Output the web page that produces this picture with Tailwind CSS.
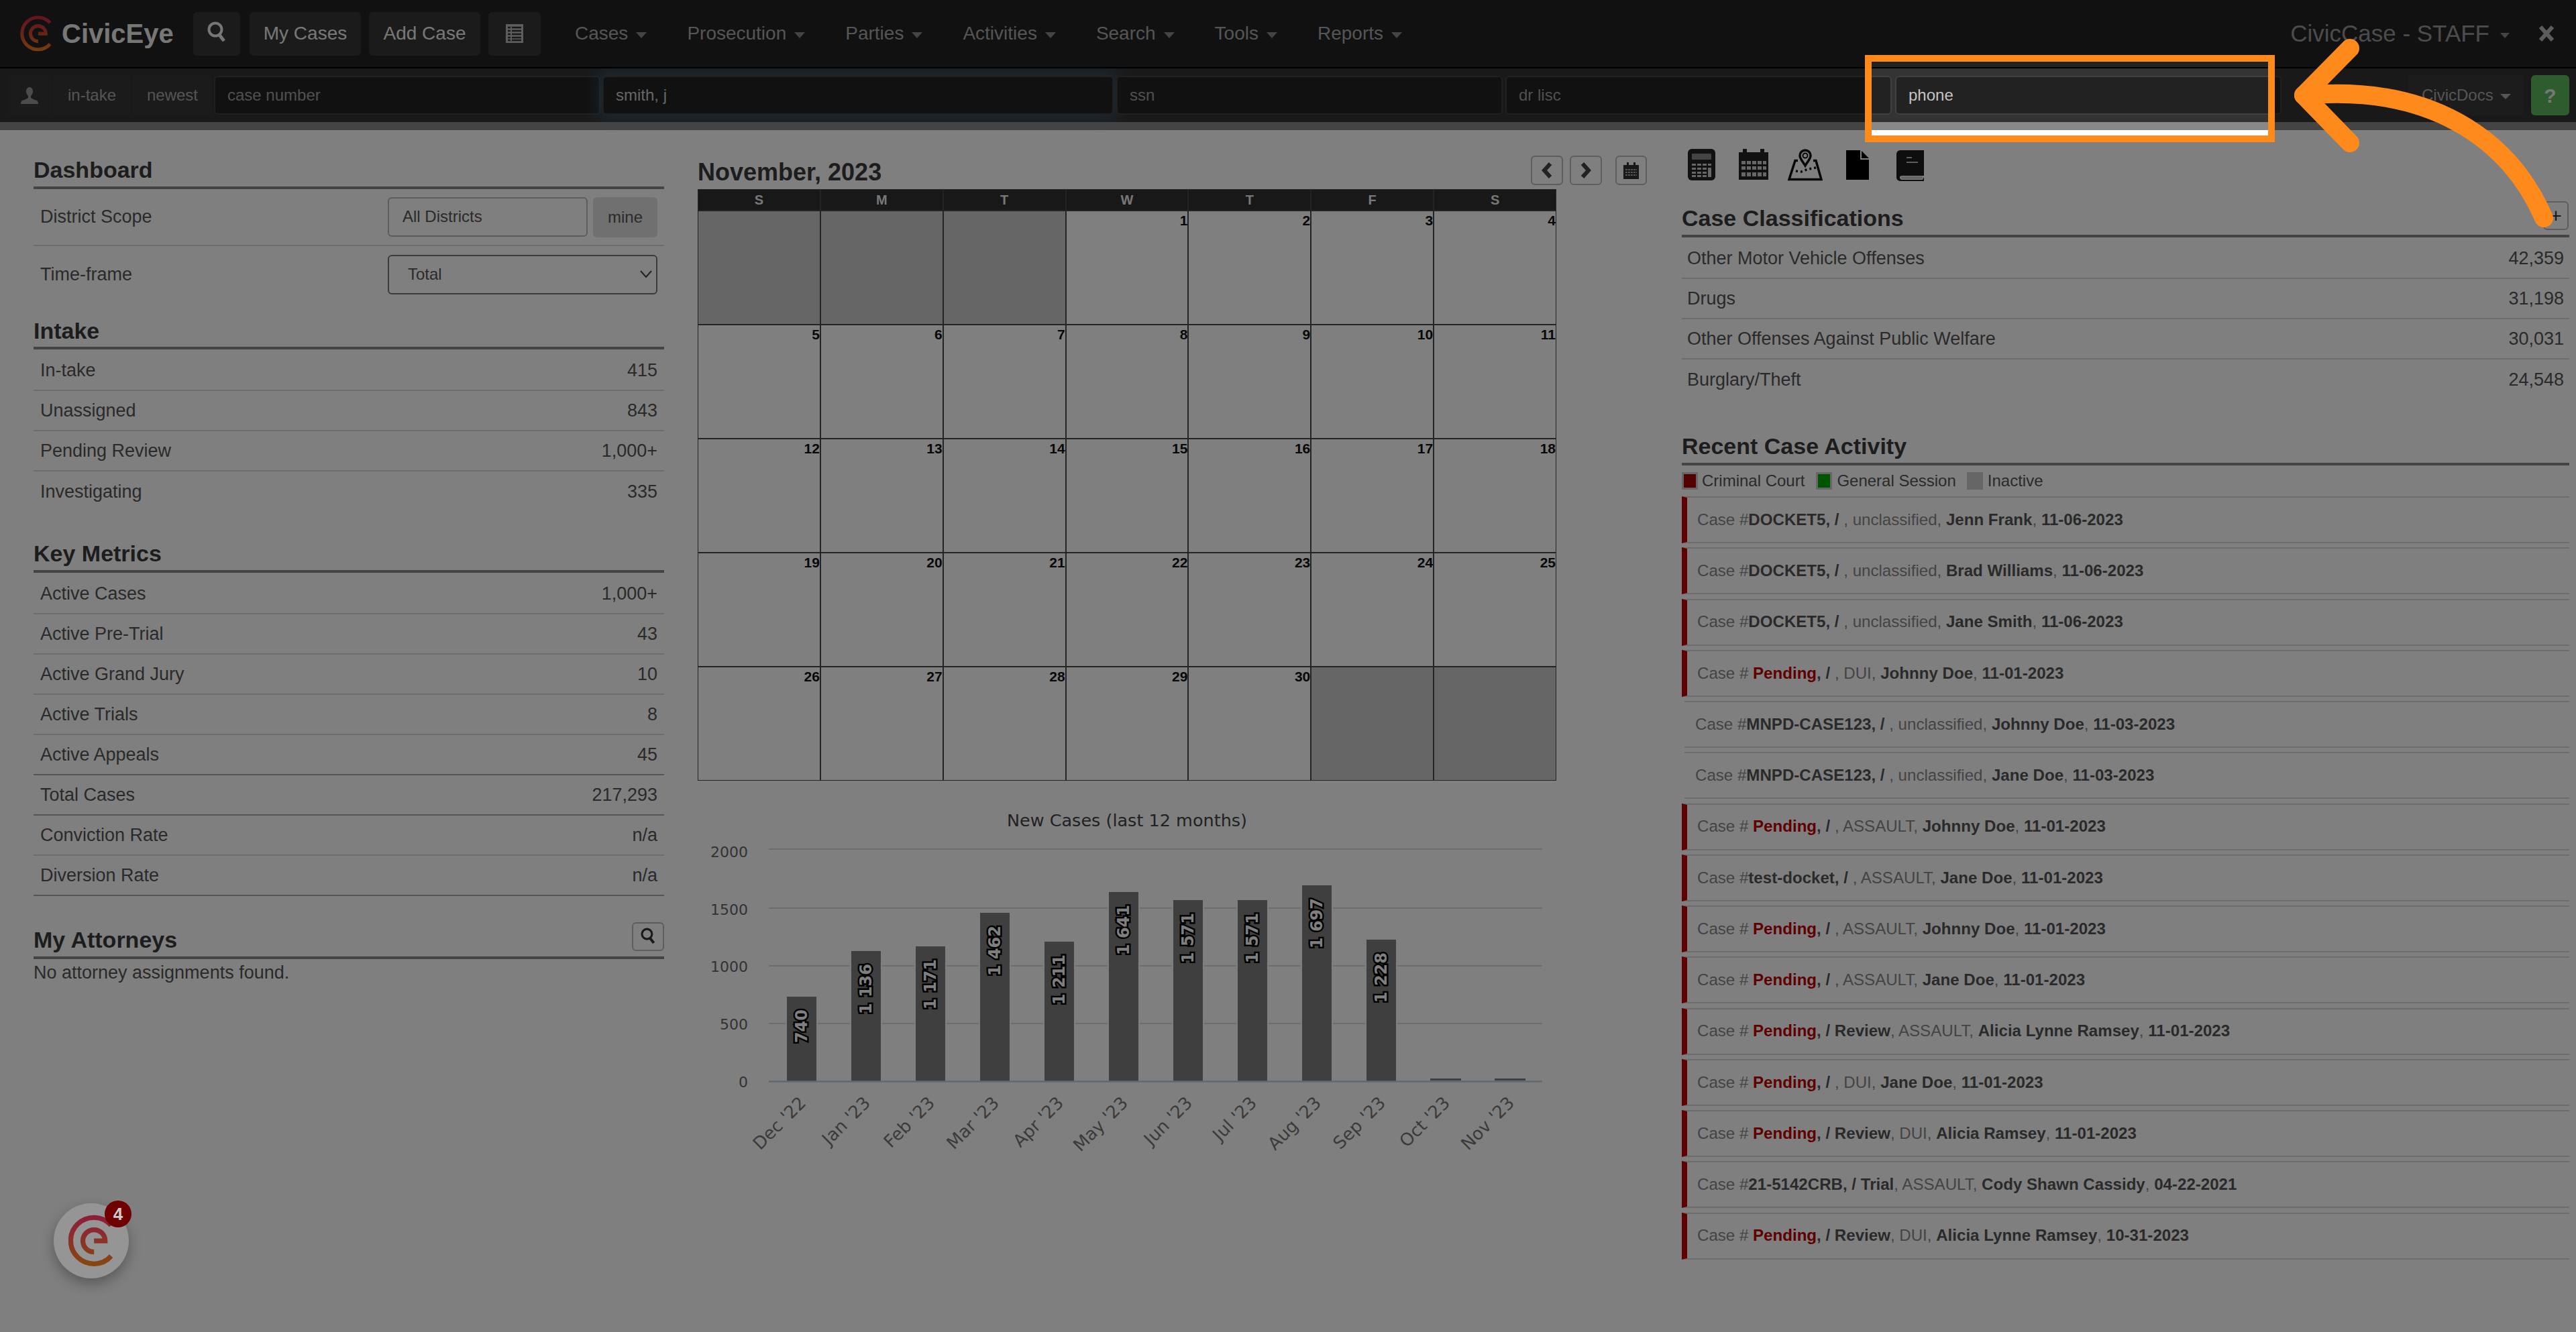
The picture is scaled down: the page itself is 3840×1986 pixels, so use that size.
<!DOCTYPE html>
<html lang="en">
<head>
  <meta charset="UTF-8">
  <title>CivicEye - Dashboard</title>
  <script src="https://cdn.jsdelivr.net/npm/@tailwindcss/browser@4"></script>
</head>
<body class="bg-white">
<div class="relative w-[3840px] h-[1986px] overflow-hidden bg-white text-[#555] text-[27px] [font-family:'Liberation_Sans',Arial,sans-serif]">

  <!-- top nav -->
  <header class="relative flex items-center h-[102px] pl-[30px] pr-[32px] bg-[#222] border-b-2 border-black">
    <svg class="w-[48px] h-[54px]" viewBox="180 152 205 235" fill="none" stroke="url(#logoTop)" stroke-width="22">
      <defs><linearGradient id="logoTop" gradientUnits="userSpaceOnUse" x1="0" y1="152" x2="0" y2="387"><stop offset="0" stop-color="#c8244a"/><stop offset="0.5" stop-color="#cc4a2c"/><stop offset="1" stop-color="#ea7d1c"/></linearGradient></defs>
      <path d="M372 200A104 104 0 1 0 372 338"/><path d="M295 270H345A50 50 0 1 0 295 320"/>
    </svg>
    <span class="ml-[14px] w-[196px] text-[40px] font-bold text-[#eee]">CivicEye</span>
    <button class="flex items-center justify-center w-[70px] h-[65px] rounded-[6px] bg-[#363636]">
      <svg class="w-[28px] h-[30px] -mt-[6px]" viewBox="0 0 28 30" fill="none" stroke="#eee" stroke-width="4"><circle cx="12" cy="12" r="9.5"/><path d="M18 20l7 9" stroke-width="5"/></svg>
    </button>
    <button class="ml-[14px] w-[166px] h-[65px] rounded-[6px] bg-[#363636] text-[28px] text-[#eee]">My Cases</button>
    <button class="ml-[12px] w-[166px] h-[65px] rounded-[6px] bg-[#363636] text-[28px] text-[#eee]">Add Case</button>
    <button class="flex items-center justify-center ml-[12px] w-[78px] h-[65px] rounded-[6px] bg-[#363636]">
      <svg class="w-[26px] h-[28px]" viewBox="0 0 26 28"><rect width="26" height="28" fill="#bbb"/><path d="M3 5h20M3 10h20M3 15h20M3 20h20M3 24h20" stroke="#333" stroke-width="2.5"/><path d="M8 4v21" stroke="#bbb" stroke-width="2"/></svg>
    </button>
    <nav class="flex gap-[60px] ml-[51px] text-[28px] text-[#aaa]">
      <a class="flex items-center gap-[12px]">Cases <i class="mt-[4px] border-x-[8px] border-t-[9px] border-x-transparent border-t-[#888]"></i></a>
      <a class="flex items-center gap-[12px]">Prosecution <i class="mt-[4px] border-x-[8px] border-t-[9px] border-x-transparent border-t-[#888]"></i></a>
      <a class="flex items-center gap-[12px]">Parties <i class="mt-[4px] border-x-[8px] border-t-[9px] border-x-transparent border-t-[#888]"></i></a>
      <a class="flex items-center gap-[12px]">Activities <i class="mt-[4px] border-x-[8px] border-t-[9px] border-x-transparent border-t-[#888]"></i></a>
      <a class="flex items-center gap-[12px]">Search <i class="mt-[4px] border-x-[8px] border-t-[9px] border-x-transparent border-t-[#888]"></i></a>
      <a class="flex items-center gap-[12px]">Tools <i class="mt-[4px] border-x-[8px] border-t-[9px] border-x-transparent border-t-[#888]"></i></a>
      <a class="flex items-center gap-[12px]">Reports <i class="mt-[4px] border-x-[8px] border-t-[9px] border-x-transparent border-t-[#888]"></i></a>
    </nav>
    <div class="flex items-center ml-auto text-[35px] text-[#999]">
      <span>CivicCase - STAFF</span>
      <i class="ml-[16px] mt-[6px] border-x-[7px] border-t-[8px] border-x-transparent border-t-[#888]"></i>
      <svg class="ml-[43px] w-[24px] h-[26px]" viewBox="0 0 24 26" fill="none" stroke="#b8b8b8" stroke-width="6"><path d="M3 3l18 20M21 3L3 23"/></svg>
    </div>
  </header>

  <!-- search bar -->
  <div class="flex items-center h-[80px] pl-[12px] pr-[10px] gap-[3px] bg-[#333] text-[24px]">
    <div class="flex items-center justify-center w-[64px] h-[58px] rounded-[4px] bg-[#363636]">
      <svg class="w-[26px] h-[25px]" viewBox="0 0 26 25" fill="#999"><path d="M13 0c3.500 0 5 3 5 6.500 0 3-1.500 5-3 6.500v3c3 2 7 3 9 4 1 .6 2 1.500 2 5H0c0-3.500 1-4.400 2-5 2-1 6-2 9-4v-3C9.500 11.500 8 9.500 8 6.500 8 3 9.500 0 13 0z"/></svg>
    </div>
    <button class="w-[116px] h-[58px] rounded-[4px] bg-[#363636] text-[#aaa]">in-take</button>
    <button class="w-[118px] h-[58px] rounded-[4px] bg-[#363636] text-[#aaa]">newest</button>
    <input class="w-[576px] h-[58px] pl-[18px] rounded-[6px] bg-[#222] border-2 border-[#404040] placeholder:text-[#a0a0a0]" placeholder="case number">
    <input class="w-[762px] h-[58px] pl-[18px] rounded-[6px] bg-[#222] border-2 border-[#404040] text-[#ccc] shadow-[0_0_24px_6px_rgba(82,168,236,0.3)]" value="smith, j">
    <input class="ml-[1px] w-[576px] h-[58px] pl-[18px] rounded-[6px] bg-[#222] border-2 border-[#404040] placeholder:text-[#a0a0a0]" placeholder="ssn">
    <input class="ml-[1px] w-[576px] h-[58px] pl-[18px] rounded-[6px] bg-[#222] border-2 border-[#404040] placeholder:text-[#a0a0a0]" placeholder="dr lisc">
    <input class="ml-[2px] w-[576px] h-[58px] pl-[18px] rounded-[6px] bg-[#222] border-2 border-[#404040] placeholder:text-[#c4c4c4]" placeholder="phone">
    <button class="flex items-center gap-[10px] ml-auto w-[172px] h-[60px] pl-[20px] rounded-[6px] bg-[#383838] text-[#aaa]">CivicDocs <i class="mt-[3px] border-x-[8px] border-t-[8px] border-x-transparent border-t-[#aaa]"></i></button>
    <button class="ml-[8px] w-[57px] h-[60px] rounded-[6px] bg-[#5cb85c] text-[30px] font-bold text-[#eee]">?</button>
  </div>
  <div class="relative h-[12px] bg-[#888]"></div>

  <main class="flex items-start">

    <!-- left column -->
    <section class="ml-[50px] mt-[39px] w-[940px]">
      <h2 class="pb-[5px] text-[34px] leading-[40px] font-bold text-[#3a3a3a] border-b-4 border-[#888]">Dashboard</h2>
      <div class="flex items-center justify-between h-[85px] px-[10px] border-b-2 border-[#d8d8d8]">
        <span>District Scope</span>
        <div class="flex gap-[8px] text-[24px]">
          <div class="flex items-center w-[298px] h-[59px] pl-[20px] rounded-[6px] border-2 border-[#bbb]">All Districts</div>
          <button class="w-[96px] h-[60px] rounded-[6px] bg-[#e0e0e0]">mine</button>
        </div>
      </div>
      <div class="flex items-center justify-between h-[84px] px-[10px]">
        <span>Time-frame</span>
        <div class="relative">
          <select class="block w-[402px] h-[59px] pl-[28px] appearance-none rounded-[6px] border-2 border-[#777] bg-white text-[24px]"><option>Total</option></select>
          <svg class="absolute right-[8px] top-[23px] w-[18px] h-[12px]" viewBox="0 0 18 12" fill="none" stroke="#444" stroke-width="2"><path d="M1 1l8 9 8-9"/></svg>
        </div>
      </div>

      <h2 class="mt-[22px] pb-[4px] text-[34px] leading-[40px] font-bold text-[#3a3a3a] border-b-4 border-[#888]">Intake</h2>
      <div class="mt-[2px]">
        <div class="flex items-center justify-between h-[60px] px-[10px] border-b-2 border-[#d8d8d8]"><span>In-take</span><span>415</span></div>
        <div class="flex items-center justify-between h-[60px] px-[10px] border-b-2 border-[#d8d8d8]"><span>Unassigned</span><span>843</span></div>
        <div class="flex items-center justify-between h-[60px] px-[10px] border-b-2 border-[#d8d8d8]"><span>Pending Review</span><span>1,000+</span></div>
        <div class="flex items-center justify-between h-[60px] px-[10px]"><span>Investigating</span><span>335</span></div>
      </div>

      <h2 class="mt-[42px] pb-[5px] text-[34px] leading-[40px] font-bold text-[#3a3a3a] border-b-4 border-[#888]">Key Metrics</h2>
      <div class="mt-[2px]">
        <div class="flex items-center justify-between h-[60px] px-[10px] border-b-2 border-[#d8d8d8]"><span>Active Cases</span><span>1,000+</span></div>
        <div class="flex items-center justify-between h-[60px] px-[10px] border-b-2 border-[#d8d8d8]"><span>Active Pre-Trial</span><span>43</span></div>
        <div class="flex items-center justify-between h-[60px] px-[10px] border-b-2 border-[#d8d8d8]"><span>Active Grand Jury</span><span>10</span></div>
        <div class="flex items-center justify-between h-[60px] px-[10px] border-b-2 border-[#d8d8d8]"><span>Active Trials</span><span>8</span></div>
        <div class="flex items-center justify-between h-[60px] px-[10px] border-b-2 border-[#aaa]"><span>Active Appeals</span><span>45</span></div>
        <div class="flex items-center justify-between h-[60px] px-[10px] border-b-2 border-[#aaa]"><span>Total Cases</span><span>217,293</span></div>
        <div class="flex items-center justify-between h-[60px] px-[10px] border-b-2 border-[#d8d8d8]"><span>Conviction Rate</span><span>n/a</span></div>
        <div class="flex items-center justify-between h-[60px] px-[10px] border-b-2 border-[#aaa]"><span>Diversion Rate</span><span>n/a</span></div>
      </div>

      <h2 class="flex items-end justify-between mt-[39px] pb-[5px] text-[34px] leading-[40px] font-bold text-[#3a3a3a] border-b-4 border-[#888]">
        My Attorneys
        <button class="flex items-center justify-center mb-[3px] w-[48px] h-[43px] rounded-[6px] border-2 border-[#bbb]">
          <svg class="w-[22px] h-[24px] -mt-[3px]" viewBox="0 0 28 30" fill="none" stroke="#333" stroke-width="4"><circle cx="12" cy="12" r="9.5"/><path d="M18 20l7 9" stroke-width="5"/></svg>
        </button>
      </h2>
      <p class="leading-[40px]">No attorney assignments found.</p>
    </section>

    <!-- calendar and chart -->
    <section class="ml-[50px] mt-[38px] w-[1415px]">
      <div class="flex items-start h-[50px]">
        <h2 class="text-[36px] leading-[50px] font-bold text-[#3a3a3a]">November, 2023</h2>
        <button class="flex items-center justify-center ml-auto w-[48px] h-[44px] rounded-[6px] border-2 border-[#bbb]">
          <svg class="w-[16px] h-[24px]" viewBox="0 0 16 24" fill="none" stroke="#444" stroke-width="6"><path d="M13 2L4 12l9 10"/></svg>
        </button>
        <button class="flex items-center justify-center ml-[10px] w-[48px] h-[44px] rounded-[6px] border-2 border-[#bbb]">
          <svg class="w-[16px] h-[24px]" viewBox="0 0 16 24" fill="none" stroke="#444" stroke-width="6"><path d="M3 2l9 10-9 10"/></svg>
        </button>
        <button class="flex items-center justify-center ml-[20px] w-[47px] h-[44px] rounded-[6px] border-2 border-[#bbb]">
          <svg class="w-[23px] h-[25px]" viewBox="0 0 23 25"><path d="M0 4h5V0h3v4h7V0h3v4h5v21H0z" fill="#333"/><path d="M3 11h17M3 15h17M3 19h17" stroke="#aaa" stroke-width="2" stroke-dasharray="3 1"/></svg>
        </button>
      </div>
      <div class="grid grid-cols-7 w-[1280px] h-[32px] bg-[#303030] text-[20px] font-bold text-[#eee] *:flex *:items-center *:justify-center *:border *:border-[#484848]">
        <div>S</div><div>M</div><div>T</div><div>W</div><div>T</div><div>F</div><div>S</div>
      </div>
      <div class="grid grid-cols-7 auto-rows-[170px] w-[1280px] text-[21px] leading-[24px] font-bold text-[#111] text-right *:pt-[2px] *:border *:border-[#484848]">
        <div class="bg-[#ccc]"></div><div class="bg-[#ccc]"></div><div class="bg-[#ccc]"></div><div>1</div><div>2</div><div>3</div><div>4</div>
        <div>5</div><div>6</div><div>7</div><div>8</div><div>9</div><div>10</div><div>11</div>
        <div>12</div><div>13</div><div>14</div><div>15</div><div>16</div><div>17</div><div>18</div>
        <div>19</div><div>20</div><div>21</div><div>22</div><div>23</div><div>24</div><div>25</div>
        <div>26</div><div>27</div><div>28</div><div>29</div><div>30</div><div class="bg-[#ccc]"></div><div class="bg-[#ccc]"></div>
      </div>

      <svg class="block mt-[26px] w-[1280px] h-[560px]" viewBox="0 0 1280 560" font-family="'DejaVu Sans', sans-serif">
        <text x="640" y="42" text-anchor="middle" font-size="25.500" fill="#444">New Cases (last 12 months)</text>
        <g stroke="#d8d8d8" stroke-width="2">
          <path d="M106 76H1259M106 164H1259M106 250H1259M106 336H1259"/>
        </g>
        <g font-size="22" fill="#666" text-anchor="end">
          <text x="75" y="88">2000</text><text x="75" y="174">1500</text><text x="75" y="259">1000</text><text x="75" y="345">500</text><text x="75" y="431">0</text>
        </g>
        <g fill="#7e7e7e" stroke="#fff" stroke-width="2">
          <rect x="132" y="295" width="46" height="128"/>
          <rect x="228" y="227" width="46" height="196"/>
          <rect x="324" y="220" width="46" height="203"/>
          <rect x="420" y="170" width="46" height="253"/>
          <rect x="516" y="213" width="46" height="210"/>
          <rect x="612" y="139" width="46" height="284"/>
          <rect x="708" y="151" width="46" height="272"/>
          <rect x="804" y="151" width="46" height="272"/>
          <rect x="900" y="129" width="46" height="294"/>
          <rect x="996" y="210" width="46" height="213"/>
        </g>
        <g fill="#7e7e7e">
          <rect x="1092" y="418" width="46" height="3"/>
          <rect x="1188" y="418" width="46" height="3"/>
        </g>
        <path d="M106 422.500H1259" stroke="#c0d0e0" stroke-width="2.500"/>
        <g font-size="24" font-weight="bold" fill="#fff" stroke="#000" stroke-width="5" paint-order="stroke" text-anchor="end" dominant-baseline="central">
          <text transform="translate(155,315) rotate(-90)">740</text>
          <text transform="translate(251,247) rotate(-90)">1 136</text>
          <text transform="translate(347,240) rotate(-90)">1 171</text>
          <text transform="translate(443,190) rotate(-90)">1 462</text>
          <text transform="translate(539,233) rotate(-90)">1 211</text>
          <text transform="translate(635,159) rotate(-90)">1 641</text>
          <text transform="translate(731,171) rotate(-90)">1 571</text>
          <text transform="translate(827,171) rotate(-90)">1 571</text>
          <text transform="translate(923,149) rotate(-90)">1 697</text>
          <text transform="translate(1019,230) rotate(-90)">1 228</text>
        </g>
        <g font-size="26" fill="#777" text-anchor="end">
          <text transform="translate(163,456) rotate(-45)">Dec '22</text>
          <text transform="translate(259,456) rotate(-45)">Jan '23</text>
          <text transform="translate(355,456) rotate(-45)">Feb '23</text>
          <text transform="translate(451,456) rotate(-45)">Mar '23</text>
          <text transform="translate(547,456) rotate(-45)">Apr '23</text>
          <text transform="translate(643,456) rotate(-45)">May '23</text>
          <text transform="translate(739,456) rotate(-45)">Jun '23</text>
          <text transform="translate(835,456) rotate(-45)">Jul '23</text>
          <text transform="translate(931,456) rotate(-45)">Aug '23</text>
          <text transform="translate(1027,456) rotate(-45)">Sep '23</text>
          <text transform="translate(1123,456) rotate(-45)">Oct '23</text>
          <text transform="translate(1219,456) rotate(-45)">Nov '23</text>
        </g>
      </svg>
    </section>

    <!-- right column -->
    <section class="ml-[52px] mt-[28px] w-[1323px]">
      <div class="flex items-start h-[48px] pl-[9px]">
        <svg class="w-[41px] h-[47px]" viewBox="0 0 41 47">
          <rect width="41" height="47" rx="6" fill="#222"/><rect x="6" y="7" width="29" height="9" rx="1" fill="#888"/>
          <path d="M6 22h6v3H6zM14 22h6v3h-6zM22 22h6v3h-6zM30 22h5v3h-5zM6 28h6v3H6zM14 28h6v3h-6zM22 28h6v3h-6zM6 34h6v3H6zM14 34h6v3h-6zM22 34h6v3h-6zM6 39h6v3H6zM14 39h6v3h-6zM22 39h6v3h-6zM30 28h5v14h-5z" fill="#ccc"/>
        </svg>
        <svg class="ml-[35px] w-[44px] h-[46px]" viewBox="0 0 44 46">
          <path d="M0 5h6V1a3 3 0 0 1 6 0v4h20V1a3 3 0 0 1 6 0v4h6v41H0z" fill="#222"/>
          <path d="M4 18h6v5H4zM12 18h6v5h-6zM20 18h6v5h-6zM28 18h6v5h-6zM36 18h5v5h-5zM4 26h6v5H4zM12 26h6v5h-6zM20 26h6v5h-6zM28 26h6v5h-6zM36 26h5v5h-5zM4 35h6v6H4zM12 35h6v6h-6zM20 35h6v6h-6zM28 35h6v6h-6zM36 35h5v6h-5z" fill="#ccc"/>
        </svg>
        <svg class="ml-[29px] w-[52px] h-[48px]" viewBox="0 0 52 48" fill="none" stroke="#111">
          <path d="M15 17.500H11L2 45.500h48l-8-28h-4" stroke-width="3.500"/>
          <path d="M26 25c-4-7-8-10-8-15a8 8 0 0 1 16 0c0 5-4 8-8 15z" stroke-width="3.500"/><circle cx="26" cy="10" r="3.500" stroke-width="2"/>
          <path d="M12 33l8 1 8-3 8-2 6-1" stroke-width="3.500" stroke-dasharray="3 4"/>
        </svg>
        <svg class="ml-[35px] mt-[2px] w-[34px] h-[44px]" viewBox="0 0 34 44"><path d="M0 0h21v14h13v30H0z" fill="#000"/><path d="M23 1l11 11H23z" fill="#000"/></svg>
        <svg class="ml-[41px] mt-[2px] w-[41px] h-[46px]" viewBox="0 0 41 46">
          <path d="M6 0h35v38H8c-2 0-3 1-3 2.500S6 44 8 44h31l2 -4v6H7c-4 0-7-2-7-6V6c0-3 2-6 6-6z" fill="#1c1c1c"/><path d="M15 11h8M15 18h17" stroke="#bbb" stroke-width="2"/><path d="M7 41h32" stroke="#ccc" stroke-width="4"/>
        </svg>
      </div>

      <h2 class="flex items-end justify-between mt-[30px] pb-[5px] text-[34px] leading-[40px] font-bold text-[#3a3a3a] border-b-4 border-[#888]">
        Case Classifications
        <button class="flex items-center justify-center mb-[2px] mr-[1px] w-[38px] h-[43px] rounded-[6px] border-2 border-[#bbb] text-[30px] font-normal text-[#333]">+</button>
      </h2>
      <div class="mt-[2px]">
        <div class="flex items-center justify-between h-[60px] px-[8px] border-b-2 border-[#d8d8d8]"><span>Other Motor Vehicle Offenses</span><span>42,359</span></div>
        <div class="flex items-center justify-between h-[60px] px-[8px] border-b-2 border-[#d8d8d8]"><span>Drugs</span><span>31,198</span></div>
        <div class="flex items-center justify-between h-[60px] px-[8px] border-b-2 border-[#d8d8d8]"><span>Other Offenses Against Public Welfare</span><span>30,031</span></div>
        <div class="flex items-center justify-between h-[60px] px-[8px]"><span>Burglary/Theft</span><span>24,548</span></div>
      </div>

      <h2 class="mt-[49px] pb-[5px] text-[34px] leading-[40px] font-bold text-[#3a3a3a] border-b-4 border-[#888]">Recent Case Activity</h2>
      <div class="flex items-center h-[26px] mt-[10px] mb-[10px] text-[24px]">
        <i class="w-[24px] h-[26px] border-[3px] border-[#ccc] bg-[#a00]"></i><span class="ml-[6px]">Criminal Court</span>
        <i class="ml-[17px] w-[24px] h-[26px] border-[3px] border-[#ccc] bg-[#0a0]"></i><span class="ml-[7px]">General Session</span>
        <i class="ml-[16px] w-[24px] h-[26px] bg-[#ccc]"></i><span class="ml-[7px]">Inactive</span>
      </div>

      <div class="text-[24.100px] text-[#888] [&_b]:text-[#555] [&_em]:not-italic [&_em]:font-bold [&_em]:text-[#c00000]">
        <div class="flex items-center h-[70px] mb-[6.250px] pl-[15px] whitespace-pre border-y-2 border-y-[#d8d8d8] border-l-[8px] border-l-[#c00000]"><span>Case #<b>DOCKET5, /</b> , unclassified, <b>Jenn Frank</b>, <b>11-06-2023</b></span></div>
        <div class="flex items-center h-[70px] mb-[6.250px] pl-[15px] whitespace-pre border-y-2 border-y-[#d8d8d8] border-l-[8px] border-l-[#c00000]"><span>Case #<b>DOCKET5, /</b> , unclassified, <b>Brad Williams</b>, <b>11-06-2023</b></span></div>
        <div class="flex items-center h-[70px] mb-[6.250px] pl-[15px] whitespace-pre border-y-2 border-y-[#d8d8d8] border-l-[8px] border-l-[#c00000]"><span>Case #<b>DOCKET5, /</b> , unclassified, <b>Jane Smith</b>, <b>11-06-2023</b></span></div>
        <div class="flex items-center h-[70px] mb-[6.250px] pl-[15px] whitespace-pre border-y-2 border-y-[#d8d8d8] border-l-[8px] border-l-[#c00000]"><span>Case # <em>Pending</em><b>, /</b> , DUI, <b>Johnny Doe</b>, <b>11-01-2023</b></span></div>
        <div class="flex items-center h-[70px] mb-[6.250px] ml-[4px] pl-[16px] whitespace-pre border-y-2 border-y-[#d8d8d8]"><span>Case #<b>MNPD-CASE123, /</b> , unclassified, <b>Johnny Doe</b>, <b>11-03-2023</b></span></div>
        <div class="flex items-center h-[70px] mb-[6.250px] ml-[4px] pl-[16px] whitespace-pre border-y-2 border-y-[#d8d8d8]"><span>Case #<b>MNPD-CASE123, /</b> , unclassified, <b>Jane Doe</b>, <b>11-03-2023</b></span></div>
        <div class="flex items-center h-[70px] mb-[6.250px] pl-[15px] whitespace-pre border-y-2 border-y-[#d8d8d8] border-l-[8px] border-l-[#c00000]"><span>Case # <em>Pending</em><b>, /</b> , ASSAULT, <b>Johnny Doe</b>, <b>11-01-2023</b></span></div>
        <div class="flex items-center h-[70px] mb-[6.250px] pl-[15px] whitespace-pre border-y-2 border-y-[#d8d8d8] border-l-[8px] border-l-[#c00000]"><span>Case #<b>test-docket, /</b> , ASSAULT, <b>Jane Doe</b>, <b>11-01-2023</b></span></div>
        <div class="flex items-center h-[70px] mb-[6.250px] pl-[15px] whitespace-pre border-y-2 border-y-[#d8d8d8] border-l-[8px] border-l-[#c00000]"><span>Case # <em>Pending</em><b>, /</b> , ASSAULT, <b>Johnny Doe</b>, <b>11-01-2023</b></span></div>
        <div class="flex items-center h-[70px] mb-[6.250px] pl-[15px] whitespace-pre border-y-2 border-y-[#d8d8d8] border-l-[8px] border-l-[#c00000]"><span>Case # <em>Pending</em><b>, /</b> , ASSAULT, <b>Jane Doe</b>, <b>11-01-2023</b></span></div>
        <div class="flex items-center h-[70px] mb-[6.250px] pl-[15px] whitespace-pre border-y-2 border-y-[#d8d8d8] border-l-[8px] border-l-[#c00000]"><span>Case # <em>Pending</em><b>, / Review</b>, ASSAULT, <b>Alicia Lynne Ramsey</b>, <b>11-01-2023</b></span></div>
        <div class="flex items-center h-[70px] mb-[6.250px] pl-[15px] whitespace-pre border-y-2 border-y-[#d8d8d8] border-l-[8px] border-l-[#c00000]"><span>Case # <em>Pending</em><b>, /</b> , DUI, <b>Jane Doe</b>, <b>11-01-2023</b></span></div>
        <div class="flex items-center h-[70px] mb-[6.250px] pl-[15px] whitespace-pre border-y-2 border-y-[#d8d8d8] border-l-[8px] border-l-[#c00000]"><span>Case # <em>Pending</em><b>, / Review</b>, DUI, <b>Alicia Ramsey</b>, <b>11-01-2023</b></span></div>
        <div class="flex items-center h-[70px] mb-[6.250px] pl-[15px] whitespace-pre border-y-2 border-y-[#d8d8d8] border-l-[8px] border-l-[#c00000]"><span>Case #<b>21-5142CRB, / Trial</b>, ASSAULT, <b>Cody Shawn Cassidy</b>, <b>04-22-2021</b></span></div>
        <div class="flex items-center h-[70px] mb-[6.250px] pl-[15px] whitespace-pre border-y-2 border-y-[#d8d8d8] border-l-[8px] border-l-[#c00000]"><span>Case # <em>Pending</em><b>, / Review</b>, DUI, <b>Alicia Lynne Ramsey</b>, <b>10-31-2023</b></span></div>
      </div>
    </section>
  </main>

  <!-- walkthrough spotlight: box-shadow dims everything outside the box -->
  <div class="absolute left-[2780px] top-[82px] z-10 w-[611px] h-[130px] border-[10px] border-[#ff8a1c] shadow-[0_0_0_4000px_rgba(0,0,0,0.5)]"></div>
  <svg class="absolute left-[3400px] top-[50px] z-10 w-[420px] h-[300px]" viewBox="3400 50 420 300" fill="none" stroke="#ff8a1c" stroke-width="28" stroke-linecap="round" stroke-linejoin="round">
    <path d="M3503 72L3434 142L3503 213"/><path d="M3434 142C3620 125 3740 205 3792 325"/>
  </svg>

  <!-- chat launcher -->
  <div class="absolute left-[80px] top-[1794px] z-20 flex items-center justify-center w-[112px] h-[112px] rounded-full bg-[#959595] shadow-[0_8px_20px_rgba(0,0,0,0.3)]">
    <svg class="w-[68px] h-[78px]" viewBox="180 152 205 235" fill="none" stroke="url(#logoChat)" stroke-width="22">
      <defs><linearGradient id="logoChat" gradientUnits="userSpaceOnUse" x1="0" y1="152" x2="0" y2="387"><stop offset="0" stop-color="#8c1c3a"/><stop offset="0.5" stop-color="#8a3228"/><stop offset="1" stop-color="#85480f"/></linearGradient></defs>
      <path d="M372 200A104 104 0 1 0 372 338"/><path d="M295 270H345A50 50 0 1 0 295 320"/>
    </svg>
    <span class="absolute left-[76px] -top-[4px] flex items-center justify-center w-[40px] h-[40px] rounded-full bg-[#700000] text-[26px] font-bold text-[#ccc]">4</span>
  </div>
</div>
</body>
</html>
